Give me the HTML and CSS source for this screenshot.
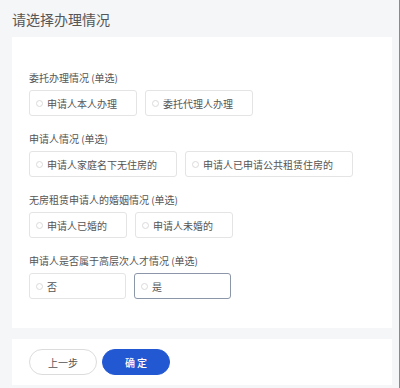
FILE: index.html
```html
<!DOCTYPE html>
<html lang="zh-CN">
<head>
<meta charset="utf-8">
<title>请选择办理情况</title>
<link rel="stylesheet" href="styles.css">
</head>
<body>
<div class="page">
  <div class="header"><h1 class="title">请选择办理情况</h1></div>
  <div class="card">
    <div class="section">
      <div class="label">委托办理情况 (单选)</div>
      <div class="options">
        <div class="option"><span class="radio"></span><span>申请人本人办理</span></div>
        <div class="option"><span class="radio"></span><span>委托代理人办理</span></div>
      </div>
    </div>
    <div class="section">
      <div class="label">申请人情况 (单选)</div>
      <div class="options">
        <div class="option"><span class="radio"></span><span>申请人家庭名下无住房的</span></div>
        <div class="option"><span class="radio"></span><span>申请人已申请公共租赁住房的</span></div>
      </div>
    </div>
    <div class="section">
      <div class="label">无房租赁申请人的婚姻情况 (单选)</div>
      <div class="options">
        <div class="option"><span class="radio"></span><span>申请人已婚的</span></div>
        <div class="option"><span class="radio"></span><span>申请人未婚的</span></div>
      </div>
    </div>
    <div class="section">
      <div class="label">申请人是否属于高层次人才情况 (单选)</div>
      <div class="options">
        <div class="option"><span class="radio"></span><span>否</span></div>
        <div class="option active"><span class="radio"></span><span>是</span></div>
      </div>
    </div>
  </div>
  <div class="footer">
    <button class="btn btn-default">上一步</button>
    <button class="btn btn-primary">确 定</button>
  </div>
</div>
</body>
</html>
```

FILE: styles.css
```css
* { box-sizing: border-box; }
html, body {
  margin: 0;
  padding: 0;
}
body {
  font-family: "Noto Sans CJK SC", "Noto Sans", sans-serif;
  color: #555;
  background: #f5f6f8;
}
.page {
  width: 400px;
  height: 388px;
  background: #f5f6f8;
  border-right: 1px solid #8a8a8a;
  overflow: hidden;
}
.header {
  height: 37px;
  padding-left: 12px;
  display: flex;
  align-items: center;
}
.title {
  margin: 0;
  font-size: 14px;
  font-weight: 400;
  color: #555;
  line-height: 20px;
}
.card {
  margin: 0 7px 0 12px;
  background: #fff;
  padding: 34px 17px 29px;
}
.section + .section {
  margin-top: 16px;
}
.label {
  font-size: 10px;
  line-height: 14px;
  color: #555;
}
.options {
  display: flex;
  gap: 8px;
  margin-top: 5px;
}
.option {
  height: 26px;
  min-width: 97px;
  display: flex;
  align-items: center;
  padding: 0 19px 0 6px;
  border: 1px solid #e4e4e4;
  border-radius: 3px;
  font-size: 10px;
  color: #555;
  background: #fff;
}
.option.active {
  border-color: #8b97a8;
}
.radio {
  width: 7px;
  height: 7px;
  border: 1px solid #dadada;
  border-radius: 50%;
  margin-right: 4px;
  flex: none;
}
.footer {
  margin: 11px 7px 0 12px;
  background: #fff;
  height: 46px;
  padding: 10px 17px;
  display: flex;
  gap: 5px;
}
.btn {
  width: 68px;
  height: 26px;
  border-radius: 13px;
  font-family: "Noto Sans CJK SC", "Noto Sans", sans-serif;
  font-size: 10px;
  padding: 0;
  cursor: pointer;
}
.btn-default {
  background: #fff;
  border: 1px solid #dcdcdc;
  color: #555;
}
.btn-primary {
  background: #2258d2;
  border: 1px solid #2258d2;
  color: #fff;
  font-weight: 500;
}
```
